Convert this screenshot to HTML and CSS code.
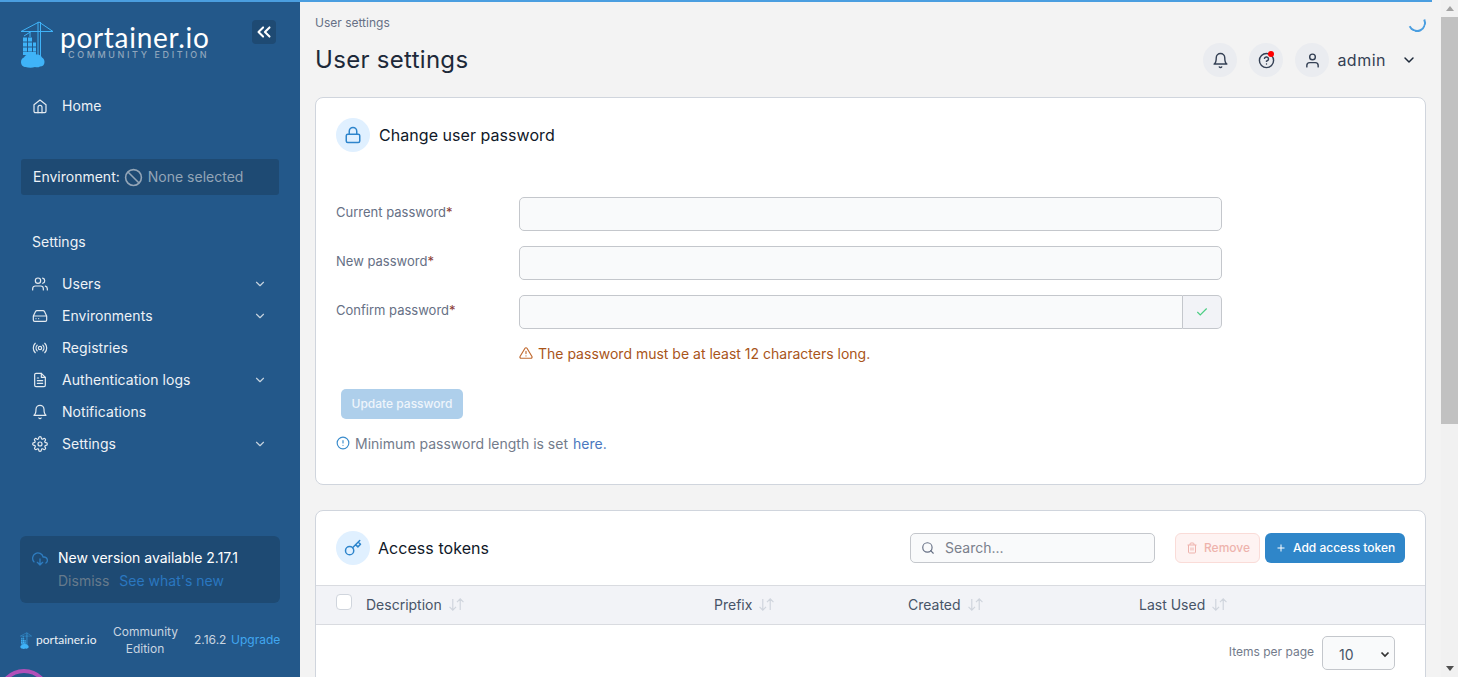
FILE: index.html
```html
<!DOCTYPE html>
<html lang="en">
<head>
    <meta charset="UTF-8">
    <title>User settings | Portainer</title>
    <link rel="stylesheet" href="styles.css">
</head>
<body>
    <svg class="defs" width="0" height="0">
        <symbol id="crane" viewBox="0 0 34 48">
            <g fill="none" stroke="currentColor" stroke-width="1">
                <path d="M1 11.500H33M19 2L1 11.500M19 2L33 11.500"/>
                <path d="M18 2V36M20.500 2V36M10 11.500V17M11 11.500L4 16"/>
            </g>
            <path d="M3 17.500h4v4H3zM8 17.500h4v4H8zM3 22.500h4v4H3zM8 22.500h4v4H8zM13 22.500h3v4h-3zM3 27.500h4v4H3zM8 27.500h4v4H8zM13 27.500h3v4h-3z" fill="currentColor"/>
            <path d="M3 32h13v3H3z" fill="currentColor"/>
            <path d="M6 47c-3 0-5-2-5-5 0-2.500 1.500-4 3-4.500 1-2.500 3.500-3.500 5.500-3 2-1.500 5-1.500 7 0 2.500-.5 5 1 5.500 3 1.500.5 2.500 2.500 2.500 4.500 0 3-2 4.500-4.500 4.500-1.500 1-3.500 1-5 .5-2.500 1-6.500 1-9.500 0z" fill="currentColor"/>
        </symbol>
    </svg>

    <div class="progress-bar"></div>
    <div class="spinner"></div>
    <div class="corner-ring"></div>

    <aside class="sidebar">
        <div class="brand">
            <svg class="brand-mark"><use href="#crane"/></svg>
            <div class="brand-text">
                <div class="brand-name">portainer.io</div>
                <div class="brand-edition">COMMUNITY EDITION</div>
            </div>
            <button class="collapse-btn">
                <svg width="22" height="22" viewBox="0 0 24 24" fill="none" stroke="currentColor" stroke-width="2.200" stroke-linecap="round" stroke-linejoin="round"><path d="M11 17l-5-5 5-5M18 17l-5-5 5-5"/></svg>
            </button>
        </div>

        <a class="nav-item nav-home">
            <svg class="nav-icon" viewBox="0 0 24 24"><path d="M3 10l9-7 9 7v10a2 2 0 0 1-2 2H5a2 2 0 0 1-2-2z"/><path d="M9 22v-8a3 3 0 0 1 6 0v8"/></svg>
            <span>Home</span>
        </a>

        <div class="env-box">
            <span class="env-label">Environment:</span>
            <svg class="env-icon" viewBox="0 0 24 24"><circle cx="12" cy="12" r="10"/><path d="M5 5l14 14"/></svg>
            <span class="env-none">None selected</span>
        </div>

        <div class="nav-title">Settings</div>

        <nav class="nav-list">
            <a class="nav-item">
                <svg class="nav-icon" viewBox="0 0 24 24"><path d="M17 21v-2a4 4 0 0 0-4-4H5a4 4 0 0 0-4 4v2"/><circle cx="9" cy="7" r="4"/><path d="M23 21v-2a4 4 0 0 0-3-3.900M16 3.100a4 4 0 0 1 0 7.800"/></svg>
                <span>Users</span>
                <svg class="nav-chevron" viewBox="0 0 24 24"><path d="M6 9l6 6 6-6"/></svg>
            </a>
            <a class="nav-item">
                <svg class="nav-icon" viewBox="0 0 24 24"><path d="M22 12H2M5.500 5L2 12v6a2 2 0 0 0 2 2h16a2 2 0 0 0 2-2v-6l-3.500-7a2 2 0 0 0-1.800-1H7.300a2 2 0 0 0-1.800 1z"/><path d="M6 16h.01M10 16h.01"/></svg>
                <span>Environments</span>
                <svg class="nav-chevron" viewBox="0 0 24 24"><path d="M6 9l6 6 6-6"/></svg>
            </a>
            <a class="nav-item">
                <svg class="nav-icon" viewBox="0 0 24 24"><circle cx="12" cy="12" r="2.500"/><path d="M16.200 7.800a6 6 0 0 1 0 8.400M7.800 16.200a6 6 0 0 1 0-8.400M19.100 4.900a10 10 0 0 1 0 14.200M4.900 19.100a10 10 0 0 1 0-14.200"/></svg>
                <span>Registries</span>
            </a>
            <a class="nav-item">
                <svg class="nav-icon" viewBox="0 0 24 24"><path d="M14 2H6a2 2 0 0 0-2 2v16a2 2 0 0 0 2 2h12a2 2 0 0 0 2-2V8z"/><path d="M14 2v6h6M16 13H8M16 17H8M10 9H8"/></svg>
                <span>Authentication logs</span>
                <svg class="nav-chevron" viewBox="0 0 24 24"><path d="M6 9l6 6 6-6"/></svg>
            </a>
            <a class="nav-item">
                <svg class="nav-icon" viewBox="0 0 24 24"><path d="M18 8a6 6 0 0 0-12 0c0 7-3 9-3 9h18s-3-2-3-9"/><path d="M13.700 21a2 2 0 0 1-3.400 0"/></svg>
                <span>Notifications</span>
            </a>
            <a class="nav-item">
                <svg class="nav-icon" viewBox="0 0 24 24"><circle cx="12" cy="12" r="3"/><path d="M19.400 15a1.650 1.650 0 0 0 .33 1.820l.06.06a2 2 0 1 1-2.830 2.830l-.06-.06a1.650 1.650 0 0 0-2.820 1.170V21a2 2 0 1 1-4 0v-.09a1.650 1.650 0 0 0-2.820-1.170l-.06.06a2 2 0 1 1-2.830-2.830l.06-.06A1.650 1.650 0 0 0 3.090 14H3a2 2 0 1 1 0-4h.09a1.650 1.650 0 0 0 1.170-2.820l-.06-.06a2 2 0 1 1 2.830-2.830l.06.06A1.650 1.650 0 0 0 10 3.090V3a2 2 0 1 1 4 0v.09a1.650 1.650 0 0 0 2.820 1.170l.06-.06a2 2 0 1 1 2.830 2.830l-.06.06A1.650 1.650 0 0 0 20.910 10H21a2 2 0 1 1 0 4h-.09a1.650 1.650 0 0 0-1.510 1z"/></svg>
                <span>Settings</span>
                <svg class="nav-chevron" viewBox="0 0 24 24"><path d="M6 9l6 6 6-6"/></svg>
            </a>
        </nav>

        <div class="update-box">
            <svg class="update-icon" viewBox="0 0 24 24"><path d="M8 17l4 4 4-4M12 12v9"/><path d="M20.900 18.100A5 5 0 0 0 18 9h-1.300A8 8 0 1 0 3 16.300"/></svg>
            <div>
                <div class="update-title">New version available 2.17.1</div>
                <div class="update-links"><span class="update-dismiss">Dismiss</span><span class="update-new">See what's new</span></div>
            </div>
        </div>

        <div class="side-footer">
            <svg class="footer-mark"><use href="#crane"/></svg>
            <span class="footer-name">portainer.io</span>
            <span class="footer-edition">Community Edition</span>
            <span class="footer-version">2.16.2</span>
            <span class="footer-upgrade">Upgrade</span>
        </div>
    </aside>

    <main class="main">
        <div class="breadcrumb">User settings</div>
        <header class="page-header">
            <h1>User settings</h1>
            <div class="header-actions">
                <span class="round-btn">
                    <svg class="header-icon" viewBox="0 0 24 24"><path d="M18 8a6 6 0 0 0-12 0c0 7-3 9-3 9h18s-3-2-3-9"/><path d="M13.700 21a2 2 0 0 1-3.400 0"/></svg>
                </span>
                <span class="round-btn">
                    <svg class="header-icon" viewBox="0 0 24 24"><circle cx="12" cy="12" r="10"/><path d="M9.100 9a3 3 0 0 1 5.800 1c0 2-3 3-3 3M12 17h.01"/></svg>
                    <i class="red-dot"></i>
                </span>
                <span class="round-btn">
                    <svg class="header-icon" viewBox="0 0 24 24"><path d="M20 21v-2a4 4 0 0 0-4-4H8a4 4 0 0 0-4 4v2"/><circle cx="12" cy="7" r="4"/></svg>
                </span>
                <span class="user-name">admin</span>
                <svg class="user-chevron" viewBox="0 0 24 24"><path d="M6 9l6 6 6-6"/></svg>
            </div>
        </header>

        <section class="card card-password">
            <div class="card-title">
                <span class="title-icon">
                    <svg viewBox="0 0 24 24"><rect x="3" y="11" width="18" height="11" rx="2"/><path d="M7 11V7a5 5 0 0 1 10 0v4"/></svg>
                </span>
                <h2>Change user password</h2>
            </div>
            <form class="password-form">
                <div class="form-row">
                    <label>Current password<em>*</em></label>
                    <input type="password" class="form-input">
                </div>
                <div class="form-row">
                    <label>New password<em>*</em></label>
                    <input type="password" class="form-input">
                </div>
                <div class="form-row">
                    <label>Confirm password<em>*</em></label>
                    <div class="input-group">
                        <input type="password" class="form-input">
                        <span class="input-addon">
                            <svg viewBox="0 0 24 24"><path d="M20 6L9 17l-5-5"/></svg>
                        </span>
                    </div>
                </div>
                <div class="form-warning">
                    <svg viewBox="0 0 24 24"><path d="M10.300 3.900L1.800 18a2 2 0 0 0 1.700 3h17a2 2 0 0 0 1.700-3L13.700 3.900a2 2 0 0 0-3.400 0z"/><path d="M12 9v4M12 17h.01"/></svg>
                    <span>The password must be at least 12 characters long.</span>
                </div>
                <button type="button" class="btn-update">Update password</button>
                <div class="form-info">
                    <svg viewBox="0 0 24 24"><circle cx="12" cy="12" r="10"/><path d="M12 8v4M12 16h.01"/></svg>
                    <span>Minimum password length is set</span>
                    <a>here.</a>
                </div>
            </form>
        </section>

        <section class="card card-tokens">
            <div class="tokens-head">
                <span class="title-icon">
                    <svg viewBox="0 0 24 24"><circle cx="7.500" cy="15.500" r="5.500"/><path d="M21 2l-9.600 9.600M15.500 7.500l3 3L22 7l-3-3"/></svg>
                </span>
                <h2>Access tokens</h2>
                <div class="search-box">
                    <svg viewBox="0 0 24 24"><circle cx="11" cy="11" r="8"/><path d="M21 21l-4.350-4.350"/></svg>
                    <span>Search...</span>
                </div>
                <button class="btn-remove">
                    <svg viewBox="0 0 24 24"><path d="M3 6h18M19 6v14a2 2 0 0 1-2 2H7a2 2 0 0 1-2-2V6M8 6V4a2 2 0 0 1 2-2h4a2 2 0 0 1 2 2v2M10 11v6M14 11v6"/></svg>
                    Remove
                </button>
                <button class="btn-add">
                    <svg viewBox="0 0 24 24"><path d="M12 5v14M5 12h14"/></svg>
                    Add access token
                </button>
            </div>
            <div class="table-head">
                <span class="table-check"></span>
                <span class="table-col">Description <svg class="sort-icon" viewBox="0 0 18 14"><path d="M5 1v12M1.500 9.500L5 13l3.500-3.500M13 13V1M9.500 4.500L13 1l3.500 3.500"/></svg></span>
                <span class="table-col">Prefix <svg class="sort-icon" viewBox="0 0 18 14"><path d="M5 1v12M1.500 9.500L5 13l3.500-3.500M13 13V1M9.500 4.500L13 1l3.500 3.500"/></svg></span>
                <span class="table-col">Created <svg class="sort-icon" viewBox="0 0 18 14"><path d="M5 1v12M1.500 9.500L5 13l3.500-3.500M13 13V1M9.500 4.500L13 1l3.500 3.500"/></svg></span>
                <span class="table-col">Last Used <svg class="sort-icon" viewBox="0 0 18 14"><path d="M5 1v12M1.500 9.500L5 13l3.500-3.500M13 13V1M9.500 4.500L13 1l3.500 3.500"/></svg></span>
            </div>
            <div class="table-foot">
                <span class="per-page">Items per page</span>
                <div class="per-select">
                    <span>10</span>
                    <svg viewBox="0 0 24 24"><path d="M5 9l7 7 7-7"/></svg>
                </div>
            </div>
        </section>
    </main>

    <div class="scrollbar">
        <span class="arrow-up"></span>
        <div class="thumb"></div>
        <span class="arrow-down"></span>
    </div>
</body>
</html>
```

FILE: styles.css
```css
* {
    box-sizing: border-box;
}

html, body {
    height: 677px;
    overflow: hidden;
}

body {
    display: flex;
    margin: 0;
    font-family: Inter, "Liberation Sans", sans-serif;
    background-color: #f3f3f3;
    color: #344054;
}

svg {
    flex-shrink: 0;
}

.defs {
    position: absolute;
}

/* overlays */
.progress-bar {
    position: absolute;
    top: 0;
    left: 0;
    width: 1432px;
    height: 2px;
    background-color: #4a9ee0;
}

.spinner {
    position: absolute;
    top: 14px;
    left: 1408px;
    width: 18px;
    height: 18px;
    border: 2px solid transparent;
    border-bottom-color: #4a9ee0;
    border-right-color: #4a9ee0;
    border-radius: 50%;
    transform: rotate(20deg);
}

.corner-ring {
    position: absolute;
    top: 669px;
    left: -2px;
    width: 52px;
    height: 52px;
    border: 4px solid #b24fb8;
    border-radius: 50%;
}

/* sidebar */
.sidebar {
    display: flex;
    flex-direction: column;
    flex: 0 0 300px;
    width: 300px;
    min-width: 0;
    height: 677px;
    background-color: #23588a;
    color: #fff;
    padding: 20px 20px 0;
}

.brand {
    display: flex;
    height: 50px;
}

.brand-mark {
    width: 34px;
    height: 48px;
    color: #3fb3f8;
}

.brand-text {
    margin-left: 6px;
}

.brand-name {
    font-family: Lato, sans-serif;
    font-size: 28px;
    line-height: 26px;
    padding-top: 4px;
    letter-spacing: .7px;
}

.brand-edition {
    font-size: 9px;
    line-height: 10px;
    letter-spacing: 2.600px;
    margin-left: 8px;
    color: #8fa6bc;
    font-weight: 500;
}

.collapse-btn {
    display: flex;
    align-items: center;
    justify-content: center;
    width: 24px;
    height: 24px;
    margin-left: auto;
    margin-right: 4px;
    padding: 0;
    border: none;
    border-radius: 4px;
    background-color: #1e4a73;
    color: #fff;
}

.nav-item {
    display: flex;
    align-items: center;
    height: 32px;
    padding: 0 0 1px 12px;
    font-size: 14px;
    letter-spacing: .05px;
    color: #eef2f6;
}

.nav-home {
    margin-top: 20px;
}

.nav-icon {
    width: 16px;
    height: 16px;
    margin-right: 14px;
    fill: none;
    stroke: #e4eaf0;
    stroke-width: 1.800;
    stroke-linecap: round;
    stroke-linejoin: round;
}

.nav-chevron {
    width: 14px;
    height: 14px;
    margin-left: auto;
    margin-right: 13px;
    fill: none;
    stroke: #c5d2de;
    stroke-width: 2;
    stroke-linecap: round;
    stroke-linejoin: round;
}

.env-box {
    display: flex;
    align-items: center;
    height: 36px;
    margin: 37px 1px 0;
    padding: 0 0 2px 12px;
    background-color: #1e4a73;
    border-radius: 3px;
    font-size: 14px;
}

.env-label {
    color: #eef2f6;
}

.env-icon {
    width: 19px;
    height: 19px;
    margin: 2px 5px 0 4px;
    fill: none;
    stroke: #93a5b7;
    stroke-width: 2;
}

.env-none {
    color: #93a5b7;
}

.nav-title {
    margin: 37px 0 16px 12px;
    font-size: 14px;
    line-height: 20px;
    color: #eef2f6;
}

.update-box {
    display: flex;
    height: 67px;
    margin-top: auto;
    padding: 13px 12px;
    border-radius: 6px;
    background-color: #1e4a73;
}

.update-icon {
    width: 16px;
    height: 16px;
    margin: 2px 10px 0 0;
    fill: none;
    stroke: #2e7cbf;
    stroke-width: 2;
    stroke-linecap: round;
    stroke-linejoin: round;
}

.update-title {
    font-size: 14px;
    line-height: 18px;
}

.update-links {
    display: flex;
    gap: 10px;
    margin-top: 5px;
    font-size: 14px;
    line-height: 18px;
}

.update-dismiss {
    color: #667a8c;
}

.update-new {
    color: #2a77c0;
}

.side-footer {
    display: flex;
    align-items: center;
    height: 74px;
    font-size: 12px;
    color: #c9d5e0;
}

.footer-mark {
    width: 12px;
    height: 17px;
    margin-right: 4px;
    color: #3fb3f8;
}

.footer-name {
    flex: 0 0 60px;
    min-width: 0;
    margin-top: -2px;
    font-family: Lato, sans-serif;
    font-size: 12px;
    white-space: nowrap;
    color: #eef2f6;
}

.footer-edition {
    flex: 0 0 64px;
    min-width: 0;
    margin: 0 17px;
    text-align: center;
    line-height: 17px;
}

.footer-version {
    flex: 0 0 32px;
    min-width: 0;
    margin: -2px 5px 0 0;
}

.footer-upgrade {
    margin-top: -2px;
    color: #41a7f0;
    white-space: nowrap;
}

/* main */
.main {
    flex: 1;
    min-width: 0;
    padding: 15px 15px 0;
}

.breadcrumb {
    font-size: 12px;
    line-height: 15px;
    color: #667085;
}

.page-header {
    display: flex;
    align-items: center;
    justify-content: space-between;
    height: 34px;
    margin-top: 13px;
    padding-right: 9px;
}

h1 {
    margin: 0 0 2px;
    font-size: 24px;
    font-weight: 400;
    letter-spacing: .3px;
    color: #1d2939;
}

.header-actions {
    display: flex;
    align-items: center;
}

.round-btn {
    position: relative;
    display: flex;
    align-items: center;
    justify-content: center;
    width: 34px;
    height: 34px;
    margin-right: 12px;
    border-radius: 50%;
    background-color: #eaecf0;
}

.header-icon {
    width: 17px;
    height: 17px;
    fill: none;
    stroke: #344054;
    stroke-width: 2;
    stroke-linecap: round;
    stroke-linejoin: round;
}

.red-dot {
    position: absolute;
    top: 8px;
    left: 19px;
    width: 6px;
    height: 6px;
    border-radius: 50%;
    background-color: #f00;
}

.user-name {
    margin-left: -4px;
    font-size: 16px;
    letter-spacing: .5px;
}

.user-chevron {
    width: 16px;
    height: 16px;
    margin-left: 15px;
    fill: none;
    stroke: #1d2939;
    stroke-width: 2.200;
    stroke-linecap: round;
    stroke-linejoin: round;
}

.card {
    background-color: #fff;
    border: 1px solid #d0d5dd;
    border-radius: 8px;
}

.card-password {
    height: 388px;
    margin-top: 20px;
    padding: 20px;
}

.card-title {
    display: flex;
    align-items: center;
    gap: 9px;
}

.title-icon {
    display: flex;
    align-items: center;
    justify-content: center;
    width: 34px;
    height: 34px;
    border-radius: 50%;
    background-color: #e0f0ff;
}

.title-icon svg {
    width: 18px;
    height: 18px;
    fill: none;
    stroke: #2e85cc;
    stroke-width: 2;
    stroke-linecap: round;
    stroke-linejoin: round;
}

h2 {
    margin: 0;
    font-size: 16px;
    font-weight: 400;
    letter-spacing: .05px;
    color: #101828;
}

.password-form {
    margin-top: 45px;
}

.form-row {
    display: flex;
    align-items: flex-start;
    height: 34px;
    margin-bottom: 15px;
}

.form-row label {
    flex: 0 0 183px;
    font-size: 13px;
    line-height: 30px;
    color: #667085;
}

.form-row em {
    font-style: normal;
    color: #8a3b35;
}

.form-input {
    display: block;
    width: 703px;
    height: 34px;
    padding: 0 12px;
    background-color: #f9fafb;
    border: 1px solid #c4c7cc;
    border-radius: 5px;
}

.input-group {
    display: flex;
    width: 703px;
}

.input-group .form-input {
    flex: 1;
    width: auto;
    border-radius: 5px 0 0 5px;
}

.input-addon {
    display: flex;
    align-items: center;
    justify-content: center;
    width: 39px;
    border: 1px solid #c4c7cc;
    border-left: none;
    border-radius: 0 5px 5px 0;
    background-color: #f2f3f7;
}

.input-addon svg {
    width: 14px;
    height: 14px;
    fill: none;
    stroke: #4bce83;
    stroke-width: 2;
}

.form-warning {
    display: flex;
    align-items: center;
    gap: 5px;
    margin: -1px 0 0 183px;
    height: 20px;
    font-size: 14px;
    color: #a9551a;
}

.form-warning svg {
    width: 14px;
    height: 14px;
    fill: none;
    stroke: #c0692f;
    stroke-width: 2;
    stroke-linecap: round;
    stroke-linejoin: round;
}

.btn-update {
    display: block;
    width: 122px;
    height: 30px;
    margin: 26px 0 0 5px;
    padding: 0 0 2px;
    border: none;
    border-radius: 5px;
    background-color: #aecfeb;
    color: #eef5fb;
    font: 500 12px Inter, sans-serif;
}

.form-info {
    display: flex;
    align-items: center;
    height: 20px;
    margin-top: 14px;
    font-size: 14px;
    color: #737b8b;
}

.form-info svg {
    width: 14px;
    height: 14px;
    margin-right: 5px;
    fill: none;
    stroke: #3a8ccc;
    stroke-width: 2;
    stroke-linecap: round;
}

.form-info a {
    margin-left: 5px;
    color: #4a78c0;
}

.card-tokens {
    height: 300px;
    margin-top: 25px;
}

.tokens-head {
    display: flex;
    align-items: center;
    height: 74px;
    padding: 0 20px;
}

.tokens-head h2 {
    margin-left: 8px;
}

.search-box {
    display: flex;
    align-items: center;
    width: 245px;
    height: 30px;
    margin-left: auto;
    padding: 0 0 2px 10px;
    border: 1px solid #c4c7cc;
    border-radius: 5px;
    background-color: #f9fafb;
    font-size: 14px;
    color: #7a808c;
}

.search-box svg {
    width: 14px;
    height: 14px;
    margin: 2px 10px 0 0;
    fill: none;
    stroke: #667085;
    stroke-width: 2;
    stroke-linecap: round;
}

.btn-remove, .btn-add {
    display: flex;
    align-items: center;
    height: 30px;
    border-radius: 6px;
    font: 500 12px Inter, sans-serif;
}

.btn-remove {
    width: 85px;
    margin-left: 20px;
    padding: 0 0 2px 10px;
    border: 1px solid #fadcd8;
    background-color: #fef3f2;
    color: #eeb3ad;
}

.btn-add {
    width: 140px;
    margin-left: 5px;
    padding: 0 0 2px 10px;
    border: none;
    background-color: #2f86c9;
    color: #fff;
}

.btn-remove svg, .btn-add svg {
    width: 12px;
    height: 12px;
    margin: 2px 6px 0 0;
    fill: none;
    stroke: currentColor;
    stroke-width: 2;
}

.table-head {
    display: grid;
    grid-template-columns: 30px 348px 194px 231px 1fr;
    align-items: center;
    height: 40px;
    padding: 0 0 1px 20px;
    background-color: #f2f3f7;
    border-top: 1px solid #d9dbe0;
    border-bottom: 1px solid #d9dbe0;
    font-size: 14px;
    color: #475467;
}

.table-check {
    width: 16px;
    height: 16px;
    margin-top: -5px;
    background-color: #fff;
    border: 1px solid #d0d5dd;
    border-radius: 4px;
}

.table-col {
    display: flex;
    align-items: center;
    gap: 6px;
}

.sort-icon {
    width: 17px;
    height: 13px;
    fill: none;
    stroke: #d0d5dd;
    stroke-width: 1.300;
}

.table-foot {
    display: flex;
    align-items: center;
    justify-content: flex-end;
    padding: 11px 30px 0 0;
}

.per-page {
    margin: -3px 8px 0 0;
    font-size: 12px;
    color: #737b8b;
}

.per-select {
    display: flex;
    align-items: center;
    justify-content: space-between;
    width: 73px;
    height: 34px;
    padding: 2px 3px 0 16px;
    background-color: #f9fafb;
    border: 1px solid #c4c7cc;
    border-radius: 5px;
    font-size: 14px;
    color: #475467;
}

.per-select svg {
    width: 12px;
    height: 12px;
    fill: none;
    stroke: #333;
    stroke-width: 3.500;
}

/* fake browser scrollbar, it's part of the picture */
.scrollbar {
    display: flex;
    flex-direction: column;
    align-items: center;
    flex: 0 0 17px;
    height: 677px;
    background-color: #f1f1f1;
}

.arrow-up {
    margin-top: 6px;
    border: 4px solid transparent;
    border-top: none;
    border-bottom: 5px solid #a3a3a3;
}

.thumb {
    width: 100%;
    height: 407px;
    margin-top: 6px;
    background-color: #c1c1c1;
}

.arrow-down {
    margin-top: auto;
    margin-bottom: 6px;
    border: 4px solid transparent;
    border-bottom: none;
    border-top: 5px solid #505050;
}
```
